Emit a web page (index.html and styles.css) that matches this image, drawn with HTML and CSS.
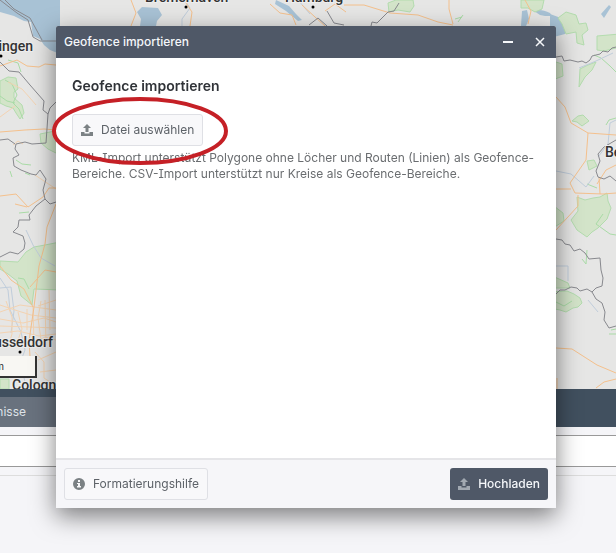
FILE: index.html
```html
<!DOCTYPE html>
<html lang="de">
<head>
  <meta charset="UTF-8" />
  <meta name="viewport" content="width=device-width, initial-scale=1" />
  <title>Geofence importieren</title>
  <link rel="stylesheet" href="styles.css">
</head>
<body>

  <!-- Karte -->
  <main class="map">
    <svg class="map-canvas" viewBox="0 0 616 389" preserveAspectRatio="xMinYMin slice" aria-hidden="true">
      <rect width="616" height="389" class="land" />

      <g class="water">
        <path d="M0 0H60V54L50 50L44 45L40 39L33 36L31 22L24 21L14 16L0 12Z" />
        <path d="M137 12L142 7L158 8L162 15L157 21L156 26H140L141 19Z" />
        <path d="M550 14L561 18L566 26L565 34L550 38Z" />
        <path d="M522 11L527 10L529 19L526 26H521Z" />
        <path d="M534 11Q540 8 550 13L552 16L545 16L540 15Z" />
        <path d="M601 14L609 5L611 7L604 18Z" />
        <path d="M276 0L289 6L296 14L302 20L298 21L286 11L275 4Z" />
      </g>

      <g class="wood">
        <path d="M388 3L396 0H413L414 6L410 12L398 10L389 12Z" />
        <path d="M521 0H544L542 9L535 12L528 8L521 8Z" />
        <path d="M558 18L566 12L576 15L579 24L586 23L588 30L582 35L584 45L577 43L576 32L566 34L562 24Z" />
        <path d="M597 36L620 34V47L604 51L597 50Z" />
        <path d="M550 60L562 64L563 76L550 81Z" />
        <path d="M580 69L588 65L596 62L592 70L585 77L579 87Z" />
        <path d="M572 121L578 116L583 115L589 121L582 126L577 122Z" />
        <path d="M587 161L594 160L597 166L589 170Z" />
        <path d="M577 197L585 200L593 198L600 197L607 193L608 201L611 208L607 219L598 228L592 232L587 237L577 230L571 220L578 211Z" />
        <path d="M550 203L563 213L564 221L550 230Z" />
        <path d="M550 292L567 291L574 294L580 298L582 303L578 307L573 308L566 312L560 310L550 308Z" />
        <path d="M550 275L568 283L570 288L550 288Z" />
        <path d="M0 81L8 77L16 78L18 89L14 92L14 98L22 105L24 113L20 119L16 113L13 108L6 106L0 103Z" />
        <path d="M40 134L60 130V155L48 149L41 143Z" />
        <path d="M18 262L26 252L34 247L45 245L60 242V290L34 289L32 305L21 296L17 281L8 274L0 269V261Z" />
        <path d="M0 379H9V389H0Z" />
      </g>

      <g class="wood-line">
        <path d="M5 80L12 84L17 95L13 103L19 109L23 119" />
        <path d="M0 96L7 101L15 103M16 160L22 164L31 165M10 171L12 177M25 173L30 175" />
        <path d="M8 60L18 63L21 72M18 278L24 279L29 289M19 213L29 212" />
        <path d="M594 55L601 58L610 66L616 72M606 125L609 120L616 118" />
        <path d="M603 214L596 224L610 234L616 235M587 184L597 188" />
        <path d="M582 259L586 264L587 250M556 302L564 306L572 301" />
        <path d="M458 22L463 15M455 19L462 17M611 330L616 329M609 334L616 334" />
      </g>

      <g class="river">
        <path d="M182 26V19L190 8L186 2M298 0L310 14" />
        <path d="M613 53L596 61L579 68M616 120L610 123L608 144L598 157" />
        <path d="M556 171L571 174L586 187L594 176M588 300L598 312" />
        <path d="M556 266L568 266V281M26 230L33 245L41 258L55 266" />
        <path d="M0 278L8 290L10 310L21 332L25 350L20 363L27 389" />
        <path d="M0 288L11 287L14 311L11 333" />
      </g>

      <g class="street">
        <path d="M0 305L15 310L31 315L56 318M0 319L23 323L44 318L56 322M0 333L18 331L39 336L56 334" />
        <path d="M6 301L12 317L12 334L8 347M18 312L22 329L18 340M27 309V330M41 301L38 318L41 340M49 290L50 330" />
        <path d="M38 306L56 300M0 346L15 340L30 345L45 337L56 340M35 352L44 362L44 378L56 386" />
        <path d="M8 82L22 89L30 98L36 105M15 106L0 117M13 145L18 141L23 144M35 175L56 189" />
        <path d="M0 312L20 305L56 310M0 326L30 327L56 328M33 307L34 345M45 300L46 345M38 360L56 352M40 372L56 370" />
      </g>
      <g class="road">
        <path d="M0 66L17 60L27 66L39 67L45 64L56 65M0 132L25 130L44 129L56 130" />
        <path d="M0 196L16 194L28 207L43 197L49 188H56M15 204L27 207" />
        <path d="M56 204L47 227L45 244L39 266L34 307L29 341L31 372" />
        <path d="M0 266L11 280L24 289L33 307M56 272L45 270L30 287" />
        <path d="M131 0L136 13L131 26M190 26L192 12L184 0" />
        <path d="M344 5L364 5L390 13L418 15L438 22L453 25M449 0V9L453 24" />
        <path d="M270 4L280 13L292 15L296 25M302 5L315 17L325 26M325 11L335 4L346 12M525 0L531 11L528 24" />
        <path d="M556 97L565 107L571 123L588 133L616 135M588 133L586 160L570 183L575 193L603 194L616 193" />
        <path d="M578 195V206L556 230M556 189H571M599 177L600 194M616 165L606 170L597 184" />
        <path d="M556 348L572 349L597 365L616 373M596 388L604 382L616 379M557 378V389" />
      </g>

      <g class="border">
        <path d="M0 0L17 13L28 20L33 37L40 41H56M5 0L14 9L30 18L42 40" />
        <path d="M0 62L9 71L19 72L30 85L44 101L43 110L48 114L46 143L32 144L25 142L16 144L15 149L19 155L13 158L14 166L21 170L31 174L36 175L40 170L46 179L43 190L45 199L50 204L56 202" />
        <path d="M48 114L50 108L56 102M0 140L8 139L15 144" />
        <path d="M45 199L36 206L29 215L30 220H19L18 227L13 232L23 236L25 243L24 249L18 254L10 252L0 257" />
        <path d="M371 26L372 22L377 23L388 12L394 11L399 3M309 25L318 18L327 26M327 11L334 23L344 25" />
        <path d="M556 57L562 56L564 61L570 60L578 62L582 61L586 63L590 60L592 56L600 54L603 51L608 52L612 48L616 47" />
        <path d="M616 140L604 147L598 154L600 161L596 171L598 177L604 179L610 176L616 181" />
        <path d="M556 239L562 240L565 244L570 245L574 251L580 249L585 253L589 259L600 258L601 270L603 278L602 286L596 288L592 292L587 289L580 291L577 288L571 287L565 290L560 290L556 294" />
        <path d="M592 292L596 299L602 303L605 312L604 320L609 328L616 326" />
      </g>

      <g class="city">
        <text x="145" y="2">Bremerhaven</text>
        <circle cx="186" cy="7" r="1.5" />
        <text x="285" y="2">Hamburg</text>
        <circle cx="313" cy="7" r="1.5" />
        <text x="33" y="51" text-anchor="end">Groningen</text>
        <circle cx="1" cy="56" r="1.5" />
        <text x="605" y="157">Berlin</text>
        <text x="53" y="347" text-anchor="end">Dusseldorf</text>
        <circle cx="20" cy="352" r="1.5" />
        <text x="12" y="390">Cologne</text>
      </g>
    </svg>
    <div class="scale"><span>30 km</span></div>
  </main>

  <!-- Untere Leiste -->
  <section class="panel">
    <nav class="tabs">
      <button type="button" class="tab"><span>Ereignisse</span></button>
    </nav>
    <div class="panel-row"></div>
    <div class="panel-content"></div>
  </section>

  <!-- Dialog -->
  <div class="overlay">
    <section class="dialog" role="dialog" aria-labelledby="dialog-title">
      <header class="dialog-header">
        <span id="dialog-title">Geofence importieren</span>
        <div class="window-buttons">
          <button type="button" aria-label="Minimieren">
            <svg width="12" height="12" viewBox="0 0 12 12"><path d="M1 6H11" /></svg>
          </button>
          <button type="button" aria-label="Schließen">
            <svg width="12" height="12" viewBox="0 0 12 12"><path class="thin" d="M2 2L10 10M10 2L2 10" /></svg>
          </button>
        </div>
      </header>

      <div class="dialog-body">
        <h1>Geofence importieren</h1>
        <div class="file-select">
          <button type="button" class="btn">
            <svg class="icon" width="12" height="12" viewBox="0 0 12 12"><path d="M6 0L10 4H7.5V8H4.5V4H2ZM0 8H3.5V9.5H8.5V8H12V12H0Z" /></svg>
            Datei auswählen
          </button>
          <svg class="marker" viewBox="0 0 176 70" aria-hidden="true"><ellipse cx="88" cy="35" rx="86" ry="32" /></svg>
        </div>
        <p>KML-Import unterstützt Polygone ohne Löcher und Routen (Linien) als Geofence-Bereiche. CSV-Import unterstützt nur Kreise als Geofence-Bereiche.</p>
      </div>

      <footer class="dialog-footer">
        <button type="button" class="btn">
          <svg class="icon" width="12" height="12" viewBox="0 0 12 12"><path fill-rule="evenodd" d="M6 0A6 6 0 1 1 6 12A6 6 0 1 1 6 0ZM5 2V4H7V2ZM4 5V6H5V8H4V9.5H8V8H7V5Z" /></svg>
          Formatierungshilfe
        </button>
        <button type="button" class="btn btn-primary">
          <svg class="icon" width="12" height="12" viewBox="0 0 12 12"><path d="M6 0L10 4H7.5V8H4.5V4H2ZM0 8H3.5V9.5H8.5V8H12V12H0Z" /></svg>
          Hochladen
        </button>
      </footer>
    </section>
  </div>

</body>
</html>
```

FILE: styles.css
```css
* {
  box-sizing: border-box;
}

body {
  margin: 0;
  height: 100vh;
  display: flex;
  flex-direction: column;
  overflow: hidden;
  background: #f5f5f8;
  font-family: Inter, "Liberation Sans", sans-serif;
  font-size: 12px;
  line-height: 16px;
  color: #6a6d70;
}

button {
  font: inherit;
  cursor: pointer;
}

/* Karte */
.map {
  flex: 1;
  min-height: 0;
  position: relative;
  overflow: hidden;
}

.map-canvas {
  display: block;
  width: 100%;
  height: 100%;
}

.map-canvas path {
  stroke-linejoin: round;
}

.land { fill: #e6e6e5; }
.water { fill: #a8c2d5; }
.wood { fill: #d3e4c9; stroke: #b3dcae; }
.wood-line { fill: none; stroke: #a9dba6; }
.river { fill: none; stroke: #c0cddb; }
.road { fill: none; stroke: #f4c08c; }
.street { fill: none; stroke: #f3d3b2; }
.border { fill: none; stroke: #88898e; }

.city {
  fill: #333;
  stroke: #eee;
  stroke-width: 2px;
  paint-order: stroke;
  font-family: Roboto, sans-serif;
  font-size: 14px;
  font-weight: 500;
}

.city circle {
  fill: #000;
  stroke: none;
}

.scale {
  position: absolute;
  left: 0;
  bottom: 11px;
  display: flex;
  justify-content: flex-end;
  align-items: center;
  width: 37px;
  height: 22px;
  padding-right: 31px;
  white-space: nowrap;
  border: 2px solid #333;
  border-width: 0 2px 2px 0;
  background: #f8f7f3;
  color: #333;
  font-size: 10px;
}

/* Untere Leiste */
.panel {
  flex: 0 0 164px;
}

.tabs {
  display: flex;
  height: 38px;
  padding-top: 8px;
  background: #41505f;
}

.tab {
  display: flex;
  justify-content: flex-end;
  align-items: center;
  width: 80px;
  padding: 0 54px 0 0;
  border: 0;
  background: #69727e;
  color: #dfe3e8;
  white-space: nowrap;
}

.panel-row {
  height: 32px;
  margin: 8px 0;
  border: 1px solid #999;
  border-width: 1px 0;
  background: #fff;
}

.panel-content {
  border-top: 1px solid #ddd;
}

/* Dialog */
.overlay {
  position: fixed;
  inset: 0;
  display: flex;
  padding: 26px 60px 45px 56px;
}

.dialog {
  flex: 1;
  display: flex;
  flex-direction: column;
  border-radius: 2px 2px 0 0;
  background: #fff;
  box-shadow: 0 8px 24px rgba(0, 0, 0, 0.5);
}

.dialog-header {
  display: flex;
  justify-content: space-between;
  align-items: center;
  height: 32px;
  padding: 0 8px;
  border-radius: 2px 2px 0 0;
  background: #4f5867;
  color: #f5f7fa;
  font-weight: 500;
}

.window-buttons {
  display: flex;
  gap: 16px;
}

.window-buttons button {
  display: flex;
  align-items: center;
  justify-content: center;
  width: 16px;
  height: 16px;
  padding: 0;
  border: 0;
  background: none;
}

.window-buttons path {
  fill: none;
  stroke: #f5f7fa;
  stroke-width: 2;
}

.window-buttons .thin {
  stroke-width: 1.5;
}

.dialog-body {
  flex: 1;
  padding: 20px 16px;
}

.dialog-body h1 {
  margin: 0 0 20px;
  color: #303338;
  font-size: 14px;
  font-weight: 600;
  line-height: 16px;
}

.dialog-body p {
  margin: 4px 0 0;
  font-feature-settings: "cv08";
}

.file-select {
  position: relative;
  display: flex;
}

.btn {
  display: flex;
  align-items: center;
  gap: 8px;
  height: 32px;
  padding: 0 8px;
  border: 1px solid #dfe0e5;
  border-radius: 3px;
  background: #f8f8fa;
  color: #5d6268;
}

.icon {
  fill: #7b8184;
}

.btn-primary {
  border: 0;
  background: #4f5867;
  color: #f5f7fa;
  font-weight: 500;
}

.btn-primary .icon {
  fill: #a2a9b2;
}

.marker {
  position: absolute;
  top: -18px;
  left: -20px;
  width: 176px;
  height: 70px;
  pointer-events: none;
}

.marker ellipse {
  fill: none;
  stroke: #c52026;
  stroke-width: 4;
}

.dialog-footer {
  display: flex;
  justify-content: space-between;
  padding: 8px;
  border-top: 2px solid #e5e5e8;
  background: #f6f6f9;
}
```
